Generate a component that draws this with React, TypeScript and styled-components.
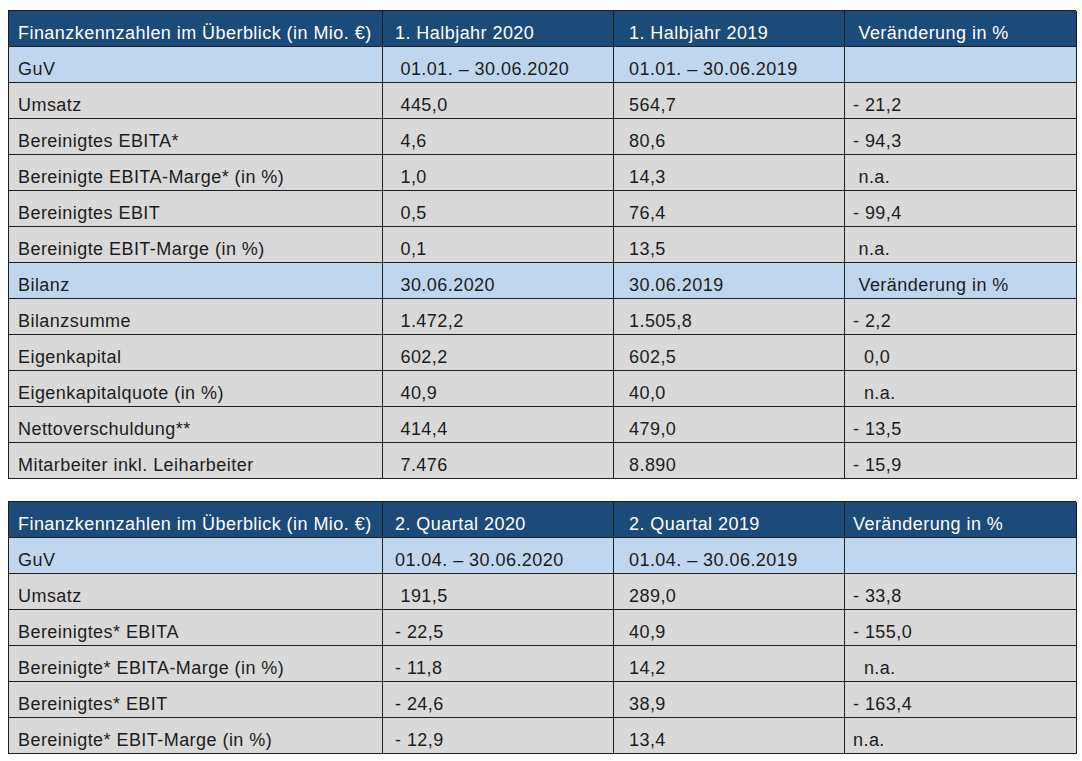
import React, { FC } from 'react';
import styled, { createGlobalStyle } from 'styled-components';

type Tone = 'head' | 'section' | 'body';

type Row = {
  tone: Tone;
  cells: string[];
};

const GlobalStyle = createGlobalStyle`
  body {
    margin: 0;
    background: #ffffff;
    font-family: 'Liberation Sans', Arial, sans-serif;
  }
`;

const Page = styled.div`
  display: flex;
  flex-direction: column;
  gap: 22px;
  padding: 10px 0 0 8px;
`;

const Table = styled.div`
  display: grid;
  grid-template-columns: 374px 231px 231px 232px;
  grid-auto-rows: 36px;
  width: 1068px;
  border-top: 1.5px solid #1e1e1e;
  border-left: 1.5px solid #1e1e1e;
  box-sizing: border-box;
`;

const Cell = styled.div<{ $tone: Tone; $indent: number }>`
  display: flex;
  align-items: flex-end;
  box-sizing: border-box;
  border-right: 1.5px solid #1e1e1e;
  border-bottom: 1.5px solid #1e1e1e;
  padding: 0 4px ${(p) => (p.$tone === 'head' ? '2px' : '2px')} ${(p) => p.$indent}px;
  background: ${(p) =>
    p.$tone === 'head' ? '#1c4a79' : p.$tone === 'section' ? '#bfd7ee' : '#d9d9d9'};
  color: ${(p) => (p.$tone === 'head' ? '#ffffff' : '#1c1c1c')};
  font-size: 18px;
  letter-spacing: 0.45px;
  line-height: 22px;
  white-space: pre;
  overflow: hidden;
`;

const indents = [9, 12, 15, 8];

const FinanceTable: FC<{ rows: Row[] }> = ({ rows }) => (
  <Table>
    {rows.map((row, i) =>
      row.cells.map((c, j) => (
        <Cell key={`${i}-${j}`} $tone={row.tone} $indent={indents[j]}>
          {c}
        </Cell>
      ))
    )}
  </Table>
);

const halfYear: Row[] = [
  { tone: 'head', cells: ['Finanzkennzahlen im Überblick (in Mio. €)', '1. Halbjahr 2020', '1. Halbjahr 2019', ' Veränderung in %'] },
  { tone: 'section', cells: ['GuV', ' 01.01. – 30.06.2020', '01.01. – 30.06.2019', ''] },
  { tone: 'body', cells: ['Umsatz', ' 445,0', '564,7', '- 21,2'] },
  { tone: 'body', cells: ['Bereinigtes EBITA*', ' 4,6', '80,6', '- 94,3'] },
  { tone: 'body', cells: ['Bereinigte EBITA-Marge* (in %)', ' 1,0', '14,3', ' n.a.'] },
  { tone: 'body', cells: ['Bereinigtes EBIT', ' 0,5', '76,4', '- 99,4'] },
  { tone: 'body', cells: ['Bereinigte EBIT-Marge (in %)', ' 0,1', '13,5', ' n.a.'] },
  { tone: 'section', cells: ['Bilanz', ' 30.06.2020', '30.06.2019', ' Veränderung in %'] },
  { tone: 'body', cells: ['Bilanzsumme', ' 1.472,2', '1.505,8', '- 2,2'] },
  { tone: 'body', cells: ['Eigenkapital', ' 602,2', '602,5', '  0,0'] },
  { tone: 'body', cells: ['Eigenkapitalquote (in %)', ' 40,9', '40,0', '  n.a.'] },
  { tone: 'body', cells: ['Nettoverschuldung**', ' 414,4', '479,0', '- 13,5'] },
  { tone: 'body', cells: ['Mitarbeiter inkl. Leiharbeiter', ' 7.476', '8.890', '- 15,9'] },
];

const quarter: Row[] = [
  { tone: 'head', cells: ['Finanzkennzahlen im Überblick (in Mio. €)', '2. Quartal 2020', '2. Quartal 2019', 'Veränderung in %'] },
  { tone: 'section', cells: ['GuV', '01.04. – 30.06.2020', '01.04. – 30.06.2019', ''] },
  { tone: 'body', cells: ['Umsatz', ' 191,5', '289,0', '- 33,8'] },
  { tone: 'body', cells: ['Bereinigtes* EBITA', '- 22,5', '40,9', '- 155,0'] },
  { tone: 'body', cells: ['Bereinigte* EBITA-Marge (in %)', '- 11,8', '14,2', '  n.a.'] },
  { tone: 'body', cells: ['Bereinigtes* EBIT', '- 24,6', '38,9', '- 163,4'] },
  { tone: 'body', cells: ['Bereinigte* EBIT-Marge (in %)', '- 12,9', '13,4', 'n.a.'] },
];

const App: FC = () => (
  <>
    <GlobalStyle />
    <Page>
      <FinanceTable rows={halfYear} />
      <FinanceTable rows={quarter} />
    </Page>
  </>
);

export default App;
